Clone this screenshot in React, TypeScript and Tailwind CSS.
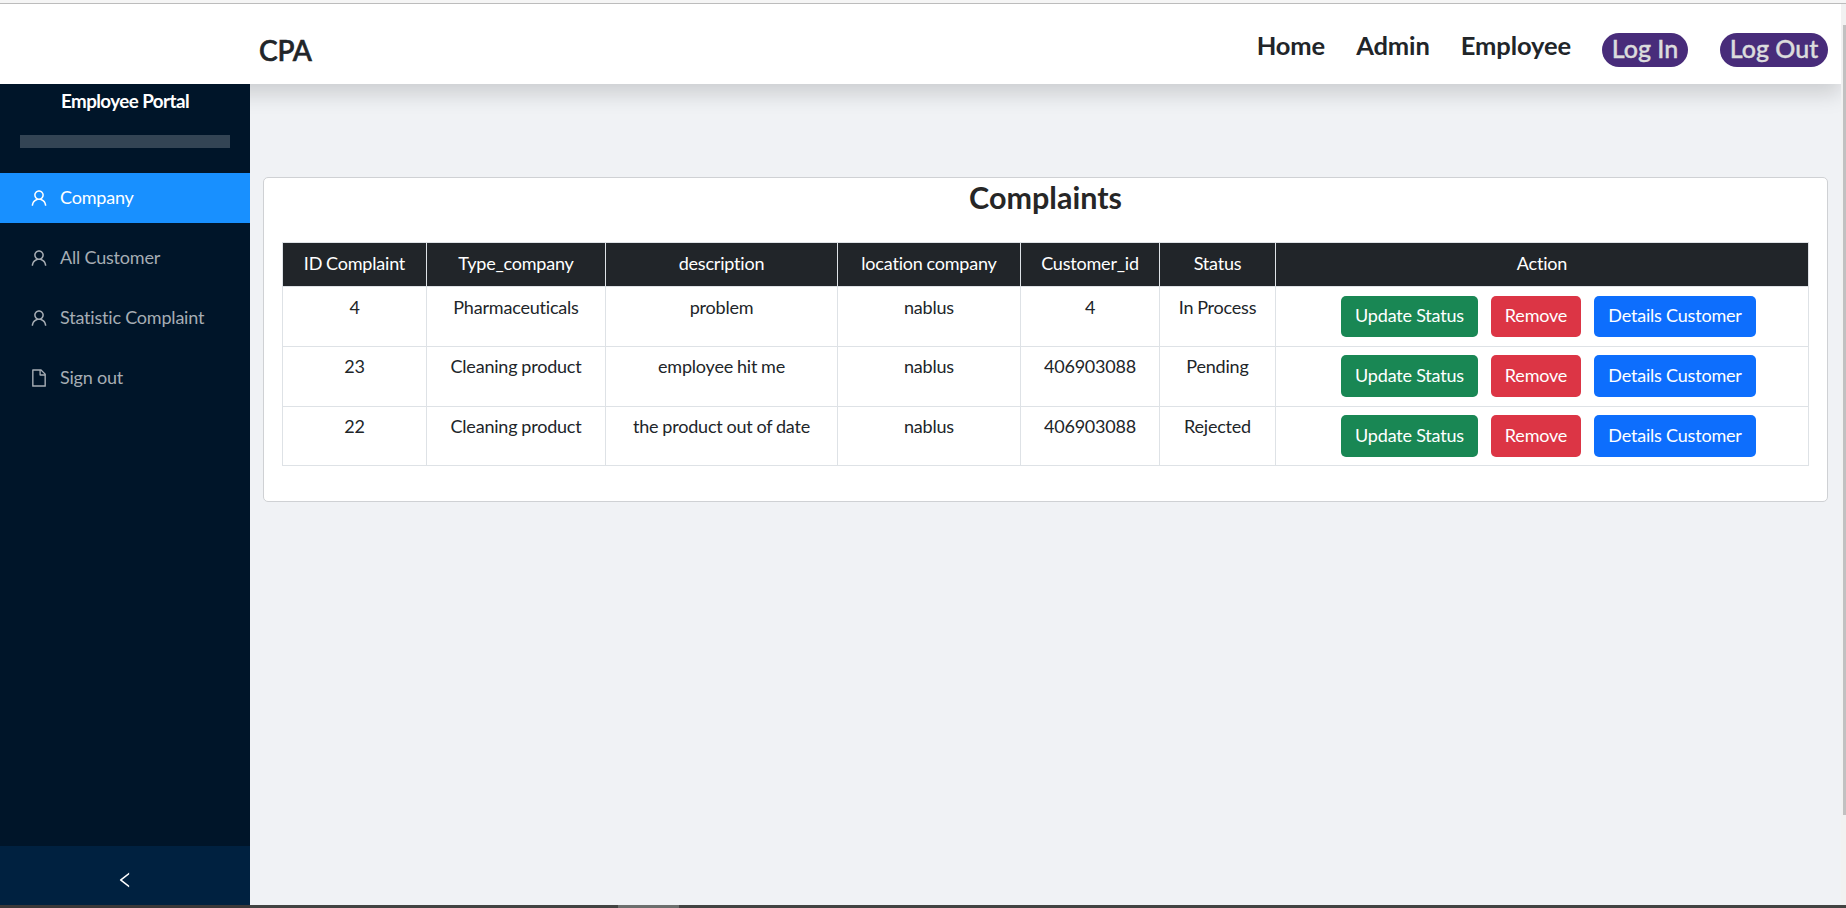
import { AiOutlineUser, AiOutlineFile, AiOutlineLeft } from "react-icons/ai";

const menu = [
  { label: "Company", icon: AiOutlineUser, active: true },
  { label: "All Customer", icon: AiOutlineUser, active: false },
  { label: "Statistic Complaint", icon: AiOutlineUser, active: false },
  { label: "Sign out", icon: AiOutlineFile, active: false },
];

const headers = ["ID Complaint", "Type_company", "description", "location company", "Customer_id", "Status", "Action"];

const rows = [
  ["4", "Pharmaceuticals", "problem", "nablus", "4", "In Process"],
  ["23", "Cleaning product", "employee hit me", "nablus", "406903088", "Pending"],
  ["22", "Cleaning product", "the product out of date", "nablus", "406903088", "Rejected"],
];

function Header() {
  return (
    <header className="relative z-10 flex h-20 shrink-0 items-start bg-white pl-[259px] pr-[13px] shadow-[0_10px_20px_rgba(0,0,0,0.15)]">
      <h3 className="mt-[29px] text-[28px] leading-[34px] font-medium tracking-[-0.2px] text-[#212529] [-webkit-text-stroke:0.7px_#212529]">CPA</h3>
      <nav className="ml-auto flex items-start text-[25px] leading-[34px]">
        <a className="mt-[24px] mr-[31px] text-[25.5px] font-bold tracking-[-0.1px] text-[#212529]">Home</a>
        <a className="mt-[24px] mr-[31px] text-[25.5px] font-bold tracking-[-0.1px] text-[#212529]">Admin</a>
        <a className="mt-[24px] mr-[31px] text-[25.5px] font-bold tracking-[-0.1px] text-[#212529]">Employee</a>
        <a className="mt-[29px] mr-8 h-[34px] w-[86px] rounded-[17px] bg-[#482c7a] text-center leading-[31px] font-medium tracking-normal text-[#dcdcdc] [-webkit-text-stroke:0.4px_#dcdcdc]">Log In</a>
        <a className="mt-[29px] h-[34px] w-[108px] rounded-[17px] bg-[#482c7a] text-center leading-[31px] font-medium tracking-normal text-[#dcdcdc] [-webkit-text-stroke:0.4px_#dcdcdc]">Log Out</a>
      </nav>
    </header>
  );
}

function Sidebar() {
  return (
    <aside className="relative z-20 flex w-[250px] shrink-0 flex-col bg-[#001529]">
      <div className="mt-[3px] text-center text-[18.75px] leading-7 font-bold tracking-[-0.55px] text-white">Employee Portal</div>
      <div className="mx-5 mt-5 h-[13px] bg-[#334454]" />
      <ul className="mt-[25px] flex flex-col gap-2.5">
        {menu.map(({ label, icon: Icon, active }) => (
          <li
            key={label}
            className={
              active
                ? "flex h-[50px] items-center gap-[11px] bg-[#1890ff] pl-[29px] text-white"
                : "flex h-[50px] items-center gap-[11px] pl-[29px] text-[#a6adb4]"
            }
          >
            <Icon className="size-5" />
            <span className="pb-0.5">{label}</span>
          </li>
        ))}
      </ul>
      <div className="mt-auto flex h-[59px] items-center justify-center bg-[#002140] pt-2 text-white">
        <AiOutlineLeft className="size-5" />
      </div>
    </aside>
  );
}

function ComplaintsTable() {
  return (
    <table className="w-[1527px] table-fixed border-collapse text-center text-[#212529]">
      <colgroup>
        <col className="w-[144px]" />
        <col className="w-[179px]" />
        <col className="w-[232px]" />
        <col className="w-[183px]" />
        <col className="w-[139px]" />
        <col className="w-[116px]" />
        <col className="w-[533px]" />
      </colgroup>
      <thead>
        <tr className="h-11 bg-[#212529] text-white [word-spacing:-0.5px]">
          {headers.map((h) => (
            <th key={h} className="border border-[#dee2e6] p-0 pb-0.5 font-normal">{h}</th>
          ))}
        </tr>
      </thead>
      <tbody>
        {rows.map((row) => (
          <tr key={row[0]} className="h-[59.75px]">
            {row.map((cell, i) => (
              <td key={i} className="border border-[#dee2e6] p-0 pt-[6.5px] align-top leading-[27px] [word-spacing:-0.5px]">{cell}</td>
            ))}
            <td className="border border-[#dee2e6] p-0 align-middle">
              <div className="flex justify-center gap-[13px] pl-[13px] leading-[39px] text-white">
                <button className="h-[41.5px] w-[137px] rounded-[5px] bg-[#198754] pb-px tracking-[-0.2px]">Update Status</button>
                <button className="h-[41.5px] w-[90px] rounded-[5px] bg-[#dc3545] pb-px tracking-[-0.2px]">Remove</button>
                <button className="h-[41.5px] w-[162px] rounded-[5px] bg-[#0d6efd] pb-px tracking-[-0.2px]">Details Customer</button>
              </div>
            </td>
          </tr>
        ))}
      </tbody>
    </table>
  );
}

export default function App() {
  return (
    <div className="flex h-[908px] w-[1846px] flex-col overflow-hidden bg-[#f0f2f5] font-['Lato',sans-serif] text-[18px] tracking-[-0.2px] [font-variant-ligatures:none]">
      <div className="h-1 shrink-0 border-b border-[#bcbcbc] bg-[#f5f5f5]" />
      <div className="flex min-h-0 flex-1">
        <div className="flex w-[1841px] flex-col overflow-hidden">
          <Header />
          <div className="flex min-h-0 flex-1">
            <Sidebar />
            <main className="flex-1 pt-[93px] pl-[13px]">
              <section className="h-[325px] w-[1565px] rounded-[5px] border border-[#cfd1d4] bg-white pl-[18px]">
                <h2 className="-ml-[18px] h-[64px] text-center text-[30.5px] leading-[38px] font-bold tracking-normal text-[#262626]">Complaints</h2>
                <ComplaintsTable />
              </section>
            </main>
          </div>
        </div>
        <div className="flex w-[5px] flex-col items-end bg-[#f1f1f1] pt-[21px]">
          <div className="h-[790px] w-[3px] bg-[#c1c1c1]" />
        </div>
      </div>
      <div className="flex h-[3px] shrink-0 bg-[#424342]">
        <div className="w-[250px] bg-[#3b3838]" />
        <div className="ml-[368px] w-[61px] bg-[#6c6f6d]" />
      </div>
    </div>
  );
}
